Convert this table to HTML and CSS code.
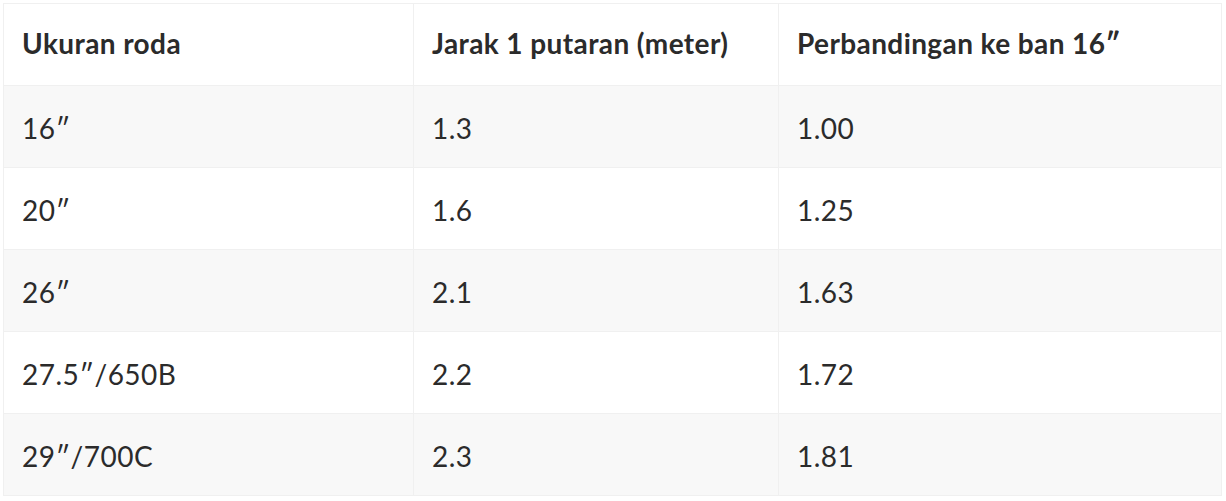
FILE: index.html
```html
<!DOCTYPE html>
<html lang="id">
<head>
<meta charset="utf-8">
<title>Ukuran roda</title>
<link rel="stylesheet" href="styles.css">
</head>
<body>
<table class="wheel-table">
  <colgroup>
    <col class="col-a">
    <col class="col-b">
    <col class="col-c">
  </colgroup>
  <thead>
    <tr>
      <th>Ukuran roda</th>
      <th>Jarak 1 putaran (meter)</th>
      <th>Perbandingan ke ban 16″</th>
    </tr>
  </thead>
  <tbody>
    <tr><td>16″</td><td>1.3</td><td>1.00</td></tr>
    <tr><td>20″</td><td>1.6</td><td>1.25</td></tr>
    <tr><td>26″</td><td>2.1</td><td>1.63</td></tr>
    <tr><td>27.5″/650B</td><td>2.2</td><td>1.72</td></tr>
    <tr><td>29″/700C</td><td>2.3</td><td>1.81</td></tr>
  </tbody>
</table>
</body>
</html>
```

FILE: styles.css
```css
html, body {
  margin: 0;
  padding: 0;
  background: #ffffff;
}

body {
  padding: 3px 0 0 3px;
  font-family: Lato, "Liberation Sans", sans-serif;
  color: #2b2b2b;
}

.wheel-table {
  border-collapse: collapse;
  width: 1218px;
  table-layout: fixed;
  border: 1px solid #f0f0f0;
}

.col-a { width: 410px; }
.col-b { width: 365px; }
.col-c { width: 443px; }

.wheel-table th,
.wheel-table td {
  height: 82px;
  padding: 2px 18px 0;
  box-sizing: border-box;
  text-align: left;
  vertical-align: middle;
  border: 1px solid #f0f0f0;
}

.wheel-table th {
  padding: 0 18px 3px;
  font-size: 28px;
  font-weight: 700;
  letter-spacing: 0.4px;
  background: #ffffff;
}

.wheel-table td {
  font-size: 28px;
  font-weight: 400;
  letter-spacing: 0.5px;
}

.wheel-table tbody tr:nth-child(odd) td {
  background: #f8f8f8;
}

.wheel-table tbody tr:nth-child(even) td {
  background: #ffffff;
}
```
